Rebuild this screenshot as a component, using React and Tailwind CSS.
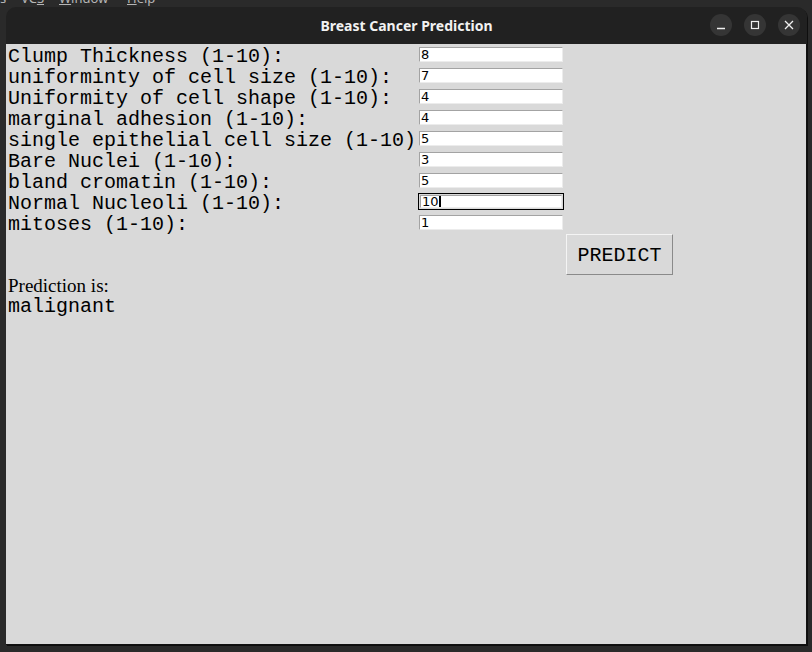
import React from 'react';

const fields = [
  ['Clump Thickness (1-10):', '8'],
  ['uniforminty of cell size (1-10):', '7'],
  ['Uniformity of cell shape (1-10):', '4'],
  ['marginal adhesion (1-10):', '4'],
  ['single epithelial cell size (1-10)', '5'],
  ['Bare Nuclei (1-10):', '3'],
  ['bland cromatin (1-10):', '5'],
  ['Normal Nucleoli (1-10):', '10'],
  ['mitoses (1-10):', '1'],
];

const mono = { fontFamily: '"Liberation Mono", "DejaVu Sans Mono", monospace' };

function Entry({ value, focused }) {
  return (
    <div className={`w-[146px] h-[17px] p-px ${focused ? 'border border-black p-0' : ''}`}>
      <div className="h-full bg-white border-t border-l border-[#a3a3a3] border-b border-r border-b-[#ececec] border-r-[#ececec] flex items-center pl-px">
        <span className="text-[13px] leading-[13px] text-black font-['DejaVu_Sans',sans-serif]">{value}</span>
        {focused && <span className="w-[2px] h-[11px] bg-black" />}
      </div>
    </div>
  );
}

export default function App() {
  return (
    <div className="w-[812px] h-[652px] bg-[#2a2a2a] overflow-hidden">
      {/* ide menu peeking above the window */}
      <div className="h-[7px] overflow-hidden">
        <div className="flex text-[13px] leading-[13px] text-[#b5b5b5] -mt-[8px] font-['Noto_Sans',sans-serif]">
          <span className="w-[21px]">s</span>
          <span className="w-[38px]">VC<span className="underline">S</span></span>
          <span className="w-[68px]"><span className="underline">W</span>indow</span>
          <span><span className="underline">H</span>elp</span>
        </div>
      </div>

      <div className="ml-[6px] w-[801px] rounded-t-[10px] overflow-hidden shadow-[1px_1px_0_#0e0e0e]">
        <div className="h-[37px] bg-[#212121] relative flex items-center justify-center">
          <span className="text-[14px] font-bold text-[#f2f2f2] font-['Noto_Sans',sans-serif] -mt-px">Breast Cancer Prediction</span>
          <div className="absolute right-[7px] top-[7px] flex gap-[12px]">
            <div className="w-[22px] h-[22px] rounded-full bg-[#353535] flex items-center justify-center">
              <svg width="10" height="10" viewBox="0 0 10 10"><path d="M1 8.5h8" stroke="#f0f0f0" strokeWidth="1.4" /></svg>
            </div>
            <div className="w-[22px] h-[22px] rounded-full bg-[#353535] flex items-center justify-center">
              <svg width="10" height="10" viewBox="0 0 10 10"><rect x="1.5" y="1.5" width="7" height="7" fill="none" stroke="#f0f0f0" strokeWidth="1.2" /></svg>
            </div>
            <div className="w-[22px] h-[22px] rounded-full bg-[#353535] flex items-center justify-center">
              <svg width="10" height="10" viewBox="0 0 10 10"><path d="M1 1l8 8M9 1l-8 8" stroke="#f0f0f0" strokeWidth="1.3" /></svg>
            </div>
          </div>
        </div>

        <div className="h-[601px] bg-[#d9d9d9] border-r border-b border-[#111] w-[801px]">
          {fields.map(([label, value], i) => (
            <div key={i} className="flex h-[21px] items-start">
              <div className="w-[412px] pl-[2px] mt-[2px] text-[20px] leading-[21px] text-black whitespace-nowrap overflow-hidden" style={mono}>
                {label}
              </div>
              <div className="mt-[2px]">
                <Entry value={value} focused={i === 7} />
              </div>
            </div>
          ))}

          <div className="flex h-[42px] pt-px">
            <div className="w-[560px]" />
            <button className="w-[107px] h-[41px] bg-[#d9d9d9] border border-t-[#f4f4f4] border-l-[#f4f4f4] border-b-[#8a8a8a] border-r-[#8a8a8a] text-[20px] leading-[21px] pt-[2px] text-black" style={mono}>
              PREDICT
            </button>
          </div>

          <div className="h-[21px] pl-[2px] text-[19px] leading-[21px] text-black font-['Liberation_Serif',serif]">
            Prediction is:
          </div>
          <div className="h-[21px] pl-[2px] text-[20px] leading-[21px] text-black" style={mono}>
            malignant
          </div>
        </div>
      </div>
    </div>
  );
}
